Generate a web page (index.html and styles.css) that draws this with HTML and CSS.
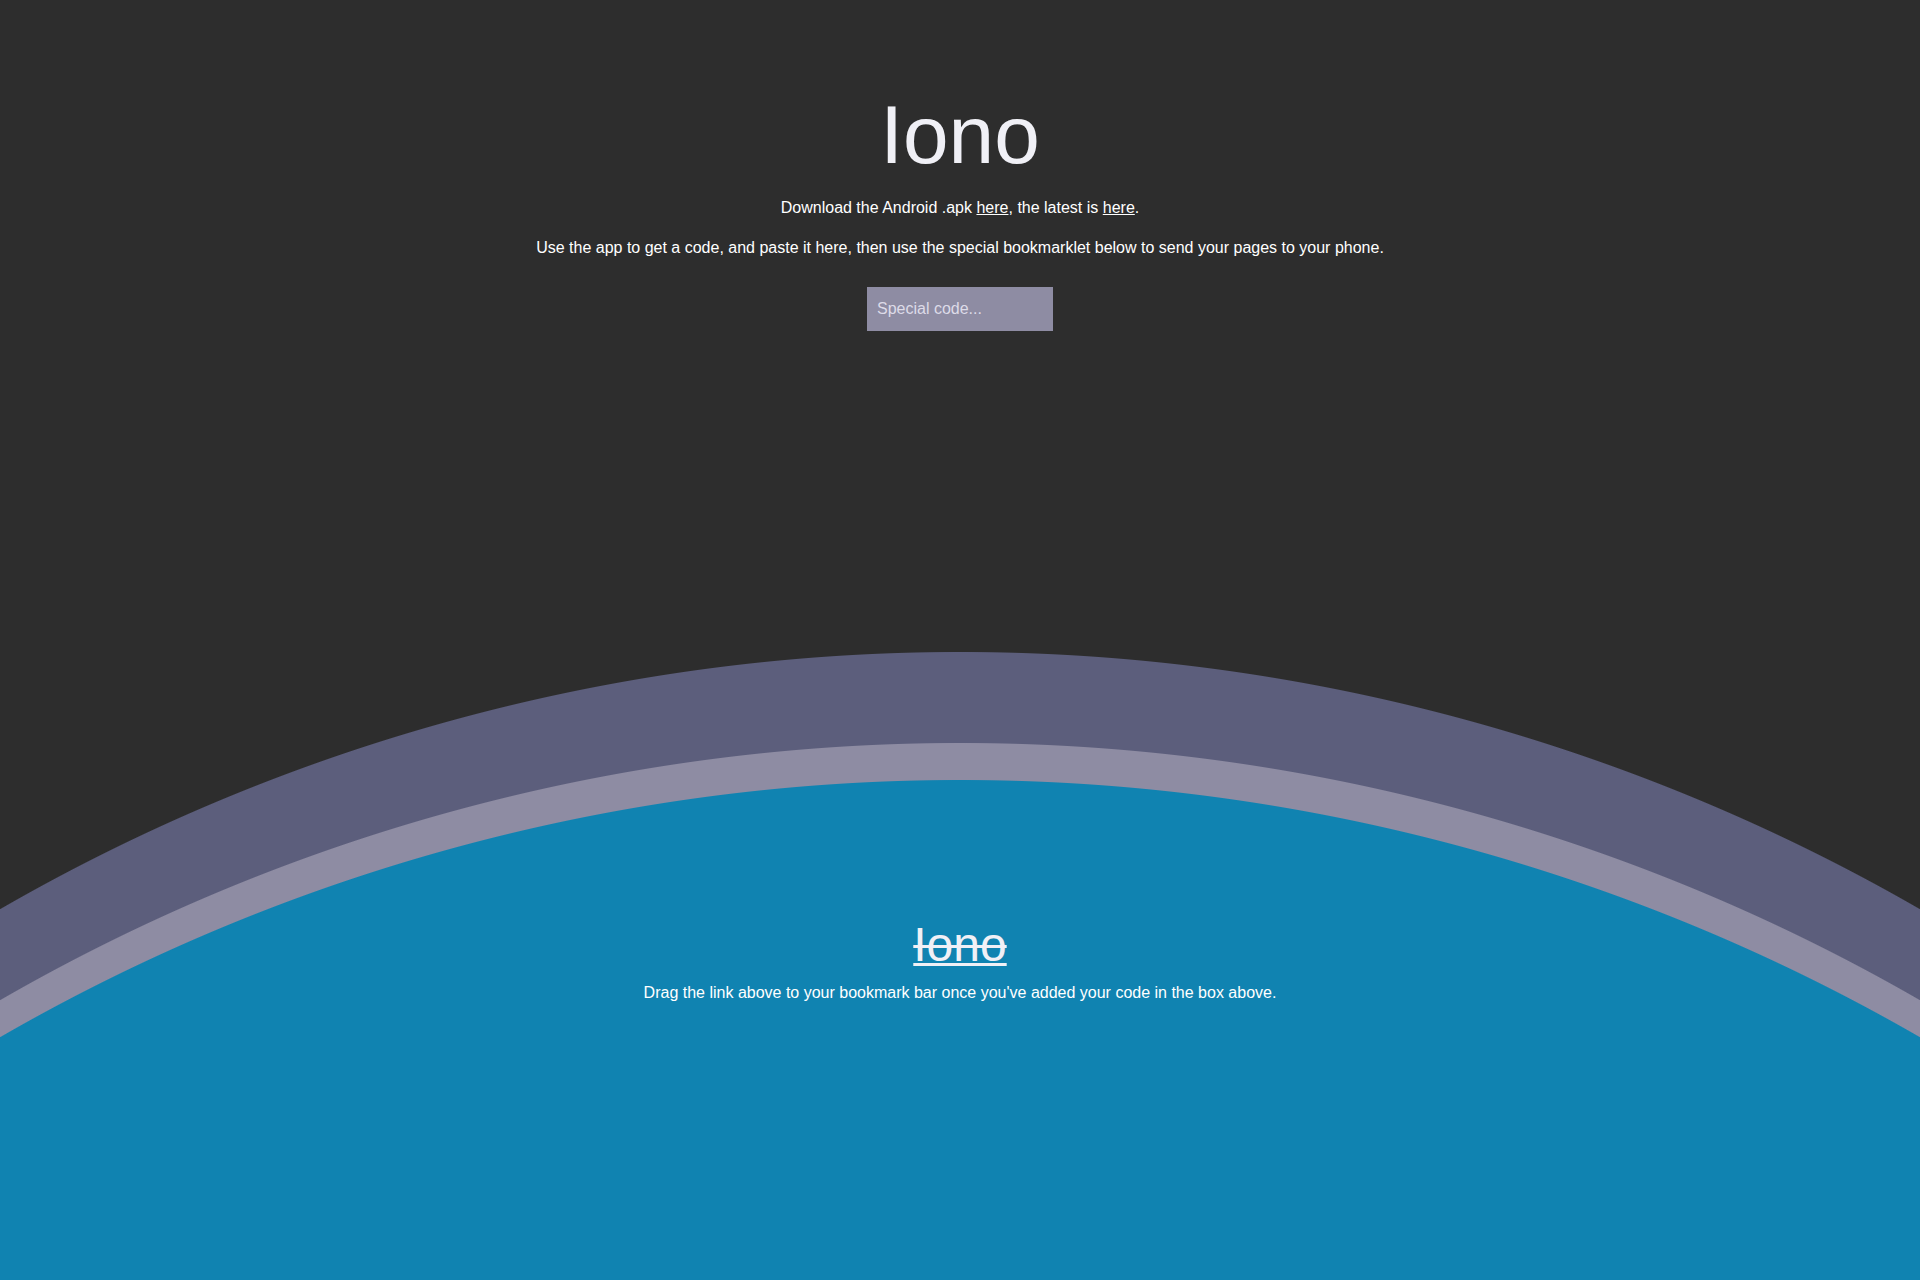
FILE: index.html
```html
<!DOCTYPE html>
<html lang="en">
<head>
<meta charset="utf-8">
<title>Iono</title>
<link rel="stylesheet" href="styles.css">
</head>
<body>
<div class="page">
  <header class="intro">
    <h1 class="title">Iono</h1>
    <p class="text text-first">Download the Android .apk <a class="link" href="#">here</a>, the latest is <a class="link" href="#">here</a>.</p>
    <p class="text">Use the app to get a code, and paste it here, then use the special bookmarklet below to send your pages to your phone.</p>
    <input class="code" type="text" placeholder="Special code...">
  </header>
  <section class="bookmark">
    <div class="bm-line"><a class="bm-link" href="#">Iono</a></div>
    <p class="bm-text">Drag the link above to your bookmark bar once you've added your code in the box above.</p>
  </section>
</div>
</body>
</html>
```

FILE: styles.css
```css
html, body {
  margin: 0;
  padding: 0;
}

body {
  font-family: "Liberation Sans", Arial, Helvetica, sans-serif;
  color: #ffffff;
  background-color: #2d2d2d;
}

.page {
  min-height: 100vh;
  box-sizing: border-box;
  padding-top: 88px;
  text-align: center;
  background:
    radial-gradient(circle at 50% 2700px, #1083b1 1919.5px, rgba(16,131,177,0) 1920.5px),
    radial-gradient(circle at 50% 2663px, #8e8ca3 1919.5px, rgba(142,140,163,0) 1920.5px),
    radial-gradient(circle at 50% 2572px, #5c5e7c 1919.5px, rgba(92,94,124,0) 1920.5px),
    #2d2d2d;
}

.intro {
  display: flex;
  flex-direction: column;
  align-items: center;
}

.title {
  margin: 0;
  font-size: 82px;
  font-weight: 400;
  line-height: 1.15;
  color: #f0f0f6;
}

.text {
  margin: 16px 0 0;
  font-size: 16px;
  line-height: 24px;
  color: #ffffff;
}

.text-first {
  margin-top: 14px;
}

.link {
  color: #ffffff;
  text-decoration: underline;
}

.code {
  margin-top: 27px;
  width: 186px;
  height: 44px;
  box-sizing: border-box;
  padding: 0 10px;
  border: none;
  outline: none;
  background: #8e8ca3;
  color: #ffffff;
  font-family: "Liberation Sans", Arial, Helvetica, sans-serif;
  font-size: 16px;
}

.code::placeholder {
  color: #dddbe8;
}

.bookmark {
  margin-top: 586px;
  display: flex;
  flex-direction: column;
  align-items: center;
}

.bm-line {
  font-size: 48px;
  line-height: 1.15;
}

.bm-link {
  color: #f0f0f6;
  text-decoration: underline line-through;
  text-decoration-thickness: 3px;
}

.bm-text {
  margin: 12px 0 0;
  font-size: 16px;
  line-height: 18px;
  color: #ffffff;
}
```
